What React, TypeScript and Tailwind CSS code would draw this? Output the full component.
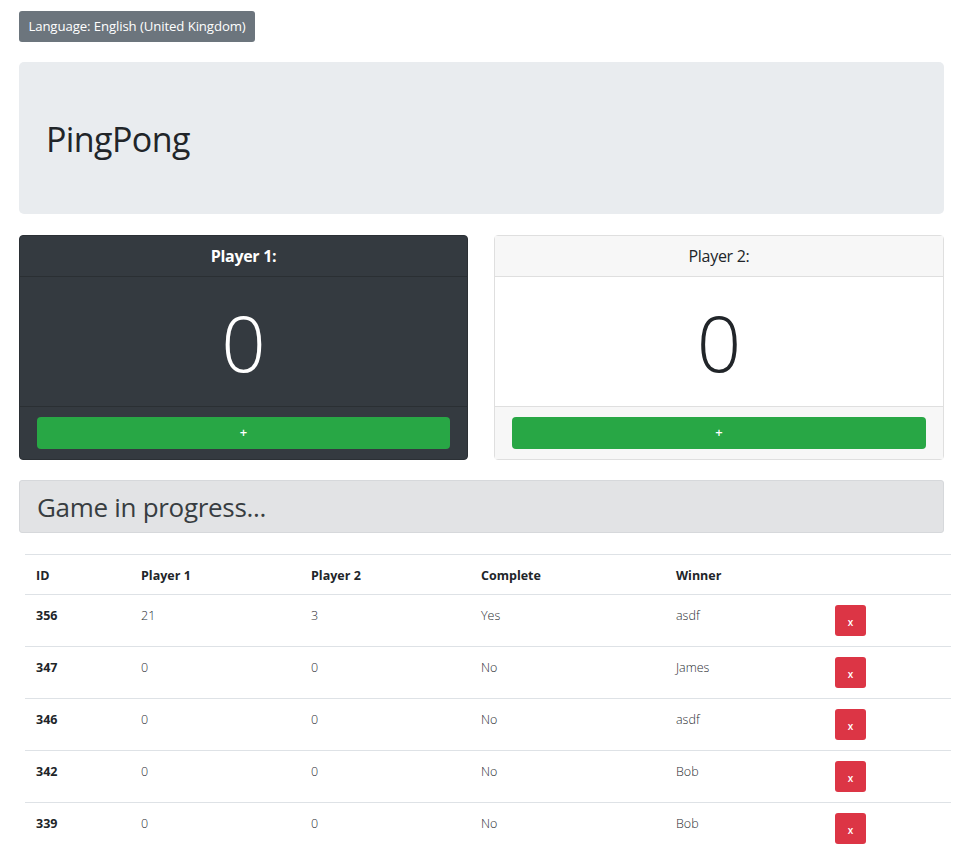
import React from "react";

const rows = [
  { id: "356", p1: "21", p2: "3", c: "Yes", w: "asdf" },
  { id: "347", p1: "0", p2: "0", c: "No", w: "James" },
  { id: "346", p1: "0", p2: "0", c: "No", w: "asdf" },
  { id: "342", p1: "0", p2: "0", c: "No", w: "Bob" },
  { id: "339", p1: "0", p2: "0", c: "No", w: "Bob" },
];

const font = { fontFamily: '"Open Sans", "Noto Sans", sans-serif' };

export default function App() {
  return (
    <div className="h-[845px] overflow-hidden bg-white text-[#212529]" style={font}>
      <div className="pl-[19px] pt-[11px]">
        <button className="h-[31px] w-[236px] rounded-[3px] bg-[#6c757d] text-white text-[13.2px] tracking-[-0.1px] leading-none">
          Language: English (United Kingdom)
        </button>
      </div>

      <div className="ml-[19px] w-[925px] mt-[20px] h-[152px] rounded-[5px] bg-[#e9ecef] flex items-center pl-[27px]">
        <h1 className="text-[34px] leading-none tracking-[-0.6px] pt-[1px]">PingPong</h1>
      </div>

      <div className="ml-[19px] w-[925px] mt-[21px] flex gap-[26px]">
        <div className="w-[449px] h-[225px] rounded-[4px] bg-[#343a40] border border-[#2b3035] flex flex-col text-white">
          <div className="h-[41px] border-b border-[#2a2f33] flex items-center justify-center font-bold text-[16px] tracking-[-0.3px]">
            Player 1:
          </div>
          <div className="h-[129px] flex items-center justify-center text-[78px] font-light leading-none">0</div>
          <div className="flex-1 border-t border-[#2a2f33] px-[17px] flex items-center">
            <button className="w-full h-[32px] rounded-[4px] bg-[#28a745] text-white text-[13px] font-semibold">+</button>
          </div>
        </div>
        <div className="w-[450px] h-[225px] rounded-[4px] bg-white border border-[#dfdfdf] flex flex-col">
          <div className="h-[41px] bg-[#f7f7f7] border-b border-[#dfdfdf] flex items-center justify-center text-[16px] tracking-[-0.3px]">
            Player 2:
          </div>
          <div className="h-[129px] flex items-center justify-center text-[78px] font-light leading-none">0</div>
          <div className="flex-1 bg-[#f7f7f7] border-t border-[#dfdfdf] px-[17px] flex items-center">
            <button className="w-full h-[32px] rounded-[4px] bg-[#28a745] text-white text-[13px] font-semibold">+</button>
          </div>
        </div>
      </div>

      <div className="ml-[19px] w-[925px] mt-[20px] h-[53px] rounded-[3px] bg-[#e2e3e5] border border-[#d6d8db] flex items-center pl-[17px]">
        <h3 className="text-[26px] text-[#383d41] leading-none tracking-[-0.3px]">Game in progress...</h3>
      </div>

      <div className="ml-[25px] w-[926px] mt-[21px]">
        <table className="w-full border-collapse text-[12.5px]">
          <colgroup>
            <col className="w-[105px]" />
            <col className="w-[170px]" />
            <col className="w-[170px]" />
            <col className="w-[195px]" />
            <col className="w-[159px]" />
            <col className="w-[127px]" />
          </colgroup>
          <thead>
            <tr className="h-[40px] border-t border-[#dee2e6]">
              {["ID", "Player 1", "Player 2", "Complete", "Winner", ""].map((h, i) => (
                <th key={i} className="text-left font-bold pl-[11px] align-middle pt-[3px]">
                  {h}
                </th>
              ))}
            </tr>
          </thead>
          <tbody>
            {rows.map((r) => (
              <tr key={r.id} className="h-[52px] border-t border-[#dee2e6]">
                <td className="pl-[11px] align-top pt-[12px] font-bold">{r.id}</td>
                <td className="pl-[11px] align-top pt-[12px] font-light text-[#2a2e33]">{r.p1}</td>
                <td className="pl-[11px] align-top pt-[12px] font-light text-[#2a2e33]">{r.p2}</td>
                <td className="pl-[11px] align-top pt-[12px] font-light text-[#2a2e33]">{r.c}</td>
                <td className="pl-[11px] align-top pt-[12px] font-light text-[#2a2e33]">{r.w}</td>
                <td className="pl-[11px] align-top pt-[10px]">
                  <button className="w-[31px] h-[31px] rounded-[3px] bg-[#dc3545] text-white text-[10px] font-semibold leading-none pt-[2px]">
                    x
                  </button>
                </td>
              </tr>
            ))}
          </tbody>
        </table>
      </div>
    </div>
  );
}
